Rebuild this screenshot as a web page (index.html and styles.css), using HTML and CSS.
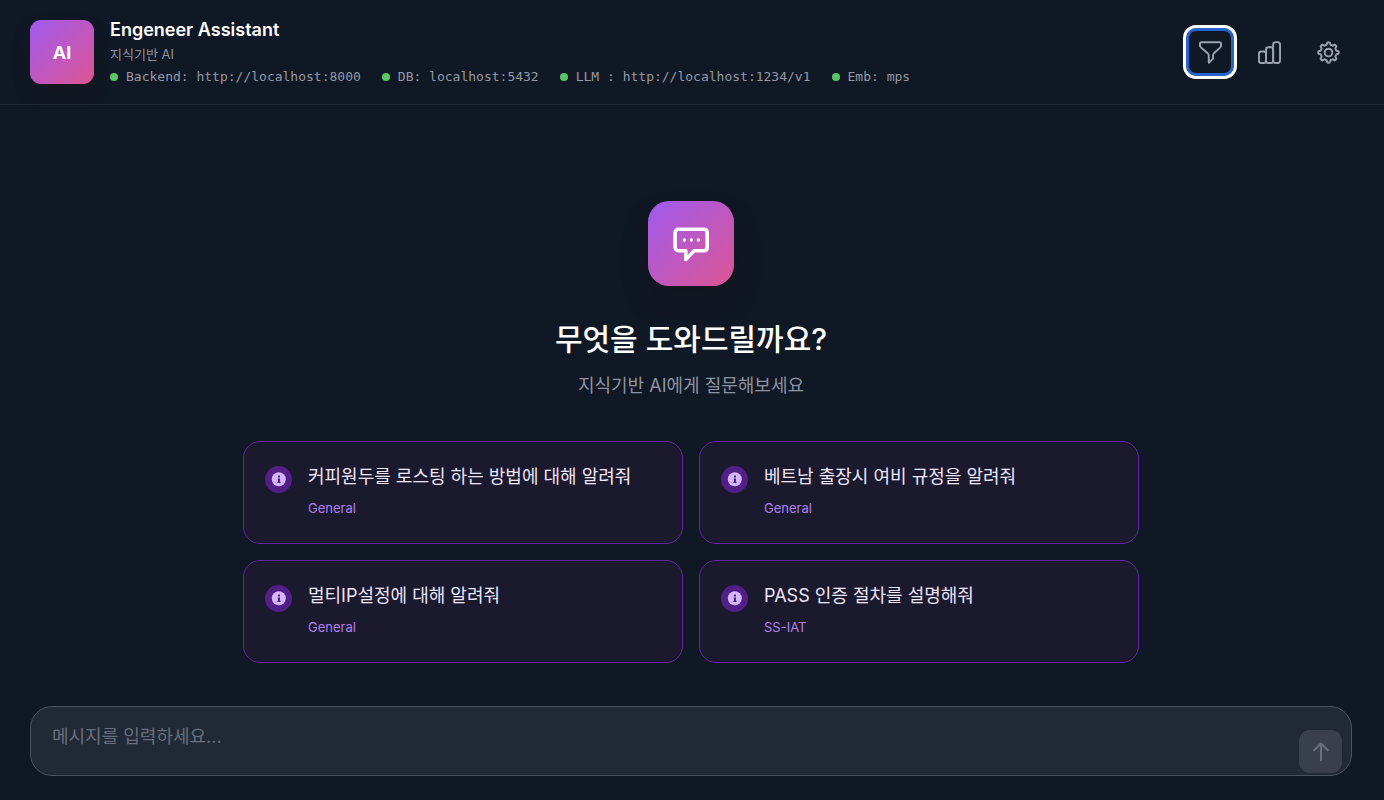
FILE: index.html
```html
<!DOCTYPE html>
<html lang="ko">
<head>
<meta charset="utf-8">
<meta name="viewport" content="width=device-width, initial-scale=1">
<title>Engeneer Assistant</title>
<link rel="stylesheet" href="styles.css">
</head>
<body>
<header class="header">
  <div class="brand">
    <div class="logo">AI</div>
    <div class="brand-text">
      <h1 class="name">Engeneer Assistant</h1>
      <p class="tagline">지식기반 AI</p>
      <ul class="status">
        <li>Backend: http://localhost:8000</li>
        <li>DB: localhost:5432</li>
        <li>LLM : http://localhost:1234/v1</li>
        <li>Emb: mps</li>
      </ul>
    </div>
  </div>
  <nav class="tools" aria-label="도구">
    <button class="tool tool-focused" type="button" aria-label="필터">
      <svg viewBox="0 0 24 24"><path d="M2.4 1.3H21.6C22.6 1.3 23 1.8 23 2.6V4.4C23 5.6 22.7 6.2 22 6.9L15.8 12.6C15 13.4 14.6 14 14.6 15V18.4L10.2 22.8V15C10.2 14 9.6 13.3 8.8 12.6L2.2 6.9C1.4 6.2 1 5.6 1 4.4V2.6C1 1.8 1.4 1.3 2.4 1.3Z"/></svg>
    </button>
    <button class="tool" type="button" aria-label="통계">
      <svg viewBox="0 0 24 24"><rect x="1" y="11" width="7.4" height="12" rx="2.4"/><rect x="8.4" y="6.6" width="7.4" height="16.4" rx="2.4"/><rect x="15.8" y="1.2" width="7.2" height="21.8" rx="2.6"/></svg>
    </button>
    <button class="tool" type="button" aria-label="설정">
      <svg viewBox="0 0 24 24"><path d="M10 3.95L10.7 1.6Q12 .9 13.3 1.6L14 3.95L16.28 4.89L18.4 3.7Q19.8 4.2 20.3 5.6L19.11 7.72L20.05 10L22.4 10.7Q23.1 12 22.4 13.3L20.05 14L19.11 16.28L20.3 18.4Q19.8 19.8 18.4 20.3L16.28 19.11L14 20.05L13.3 22.4Q12 23.1 10.7 22.4L10 20.05L7.72 19.11L5.6 20.3Q4.2 19.8 3.7 18.4L4.89 16.28L3.95 14L1.6 13.3Q.9 12 1.6 10.7L3.95 10L4.89 7.72L3.7 5.6Q4.2 4.2 5.6 3.7L7.72 4.89Z"/><circle cx="12" cy="12" r="4"/></svg>
    </button>
  </nav>
</header>
<main class="main">
  <div class="hero-icon">
    <svg viewBox="0 0 40 40" aria-hidden="true"><path class="bubble" d="M7.6 5.3H32.7Q36.2 5.3 36.2 8.8V23.2Q36.2 26.7 32.7 26.7H23.2L14.8 35.4V26.7H7.6Q4.1 26.7 4.1 23.2V8.8Q4.1 5.3 7.6 5.3Z"/><circle cx="13.3" cy="16" r="1.7"/><circle cx="20.3" cy="16" r="1.7"/><circle cx="27.4" cy="16" r="1.7"/></svg>
  </div>
  <h2 class="title">무엇을 도와드릴까요?</h2>
  <p class="subtitle">지식기반 AI에게 질문해보세요</p>
  <div class="cards">
    <button class="card" type="button">
      <svg class="info" viewBox="0 0 27 27" aria-hidden="true"><circle class="info-ring" cx="13.5" cy="13.5" r="13.5"/><circle class="info-disc" cx="13.8" cy="13.2" r="7"/><path class="info-mark" d="M13 9.6h2v1.8h-2zM12.6 12.4h2.4v3.4h.6v1.2h-3.4v-1.2h.8v-2.2h-.4z"/></svg>
      <span class="card-text"><span class="question">커피원두를 로스팅 하는 방법에 대해 알려줘</span><span class="category">General</span></span>
    </button>
    <button class="card" type="button">
      <svg class="info" viewBox="0 0 27 27" aria-hidden="true"><circle class="info-ring" cx="13.5" cy="13.5" r="13.5"/><circle class="info-disc" cx="13.8" cy="13.2" r="7"/><path class="info-mark" d="M13 9.6h2v1.8h-2zM12.6 12.4h2.4v3.4h.6v1.2h-3.4v-1.2h.8v-2.2h-.4z"/></svg>
      <span class="card-text"><span class="question">베트남 출장시 여비 규정을 알려줘</span><span class="category">General</span></span>
    </button>
    <button class="card" type="button">
      <svg class="info" viewBox="0 0 27 27" aria-hidden="true"><circle class="info-ring" cx="13.5" cy="13.5" r="13.5"/><circle class="info-disc" cx="13.8" cy="13.2" r="7"/><path class="info-mark" d="M13 9.6h2v1.8h-2zM12.6 12.4h2.4v3.4h.6v1.2h-3.4v-1.2h.8v-2.2h-.4z"/></svg>
      <span class="card-text"><span class="question">멀티IP설정에 대해 알려줘</span><span class="category">General</span></span>
    </button>
    <button class="card" type="button">
      <svg class="info" viewBox="0 0 27 27" aria-hidden="true"><circle class="info-ring" cx="13.5" cy="13.5" r="13.5"/><circle class="info-disc" cx="13.8" cy="13.2" r="7"/><path class="info-mark" d="M13 9.6h2v1.8h-2zM12.6 12.4h2.4v3.4h.6v1.2h-3.4v-1.2h.8v-2.2h-.4z"/></svg>
      <span class="card-text"><span class="question">PASS 인증 절차를 설명해줘</span><span class="category">SS-IAT</span></span>
    </button>
  </div>
</main>
<form class="composer">
  <div class="field">
    <textarea class="input" rows="1" aria-label="메시지" placeholder="메시지를 입력하세요..."></textarea>
    <button class="send" type="button" aria-label="보내기">
      <svg viewBox="0 0 20 20"><path d="M10 18.5V1.5M3.2 8.3L10 1.5L16.8 8.3"/></svg>
    </button>
  </div>
</form>
</body>
</html>
```
FILE: styles.css
```css
* { box-sizing: border-box; margin: 0; padding: 0; }
body {
  min-height: 100vh;
  display: flex;
  flex-direction: column;
  background: #111825;
  color: #fff;
  font-family: Inter, "Noto Sans CJK KR", sans-serif;
}
button { font: inherit; color: inherit; background: none; border: 0; cursor: pointer; }
.header {
  display: flex;
  justify-content: space-between;
  align-items: center;
  padding: 20px 32px 20px 30px;
  border-bottom: 1px solid #202736;
}
.brand { display: flex; align-items: center; gap: 16px; }
.logo {
  width: 64px;
  height: 64px;
  display: grid;
  place-items: center;
  border-radius: 11px;
  background: linear-gradient(135deg, #a05af0, #dc5592);
  box-shadow: 0 10px 15px rgba(20, 20, 24, .35);
  font-size: 18px;
  font-weight: 700;
}
.name { font-size: 18px; line-height: 20px; font-weight: 600; }
.tagline { font-size: 13px; line-height: 16px; margin-top: 6px; color: #8d93a0; }
.status {
  display: flex;
  flex-wrap: wrap;
  gap: 4px 21px;
  margin-top: 8px;
  list-style: none;
  color: #9499a5;
  font: 13px/14px "DejaVu Sans Mono", monospace;
}
.status li { display: flex; align-items: center; gap: 8px; }
.status li::before { content: ""; width: 8px; height: 8px; border-radius: 50%; background: #5bc466; }
.tools { display: flex; gap: 11px; }
.tool { width: 48px; height: 48px; display: grid; place-items: center; border-radius: 10px; }
.tool svg { width: 23px; height: 23px; fill: none; stroke: #9ca3af; stroke-width: 2; stroke-linejoin: round; }
.tool-focused { outline: 3px solid #fff; box-shadow: inset 0 0 0 3px #2563cf; }
.main {
  flex: 1;
  display: flex;
  flex-direction: column;
  align-items: center;
  padding: 96px 32px 0 30px;
}
.hero-icon {
  width: 86px;
  height: 85px;
  display: grid;
  place-items: center;
  border-radius: 21px;
  background: linear-gradient(135deg, #a05af0, #dc5592);
  box-shadow: 0 16px 24px rgba(18, 18, 24, .4);
}
.hero-icon svg { width: 40px; height: 40px; fill: #fff; }
.hero-icon .bubble { fill: none; stroke: #fff; stroke-width: 3.6; stroke-linejoin: round; }
.title { margin-top: 32px; font-size: 30px; line-height: 42px; font-weight: 500; }
.subtitle { margin-top: 12px; font-size: 18px; line-height: 28px; color: #8d93a0; }
.cards {
  width: 100%;
  max-width: 896px;
  display: grid;
  grid-template-columns: 1fr 1fr;
  gap: 16px;
  margin-top: 41px;
}
.card {
  display: flex;
  align-items: flex-start;
  gap: 16px;
  padding: 21px 21px 25px;
  border: 1px solid #63259f;
  border-radius: 17px;
  background: #1a192d;
  text-align: left;
}
.info { flex: none; width: 27px; height: 27px; margin-top: 3px; }
.info-ring { fill: #521f86; }
.info-disc { fill: #d5b6fa; }
.info-mark { fill: #521f86; }
.card-text { display: flex; flex-direction: column; gap: 7px; }
.question { font-size: 18px; line-height: 28px; color: #eee6fb; }
.category { font-size: 13px; line-height: 20px; color: #b080ee; }
.composer { padding: 42px 32px 24px 30px; }
.field {
  display: flex;
  align-items: flex-end;
  border: 1px solid #4a515f;
  border-radius: 22px;
  background: #222936;
  padding: 0 9px 2px 21px;
}
.input {
  flex: 1;
  height: 66px;
  resize: none;
  border: 0;
  outline: 0;
  background: transparent;
  color: #fff;
  padding-top: 16px;
  font: 18px/28px Inter, "Noto Sans CJK KR", sans-serif;
}
.input::placeholder { color: #686f7c; }
.send { width: 43px; height: 43px; display: grid; place-items: center; border-radius: 11px; background: #393f4d; }
.send svg { width: 20px; height: 20px; fill: none; stroke: #69707e; stroke-width: 2; stroke-linecap: round; stroke-linejoin: round; }
```
